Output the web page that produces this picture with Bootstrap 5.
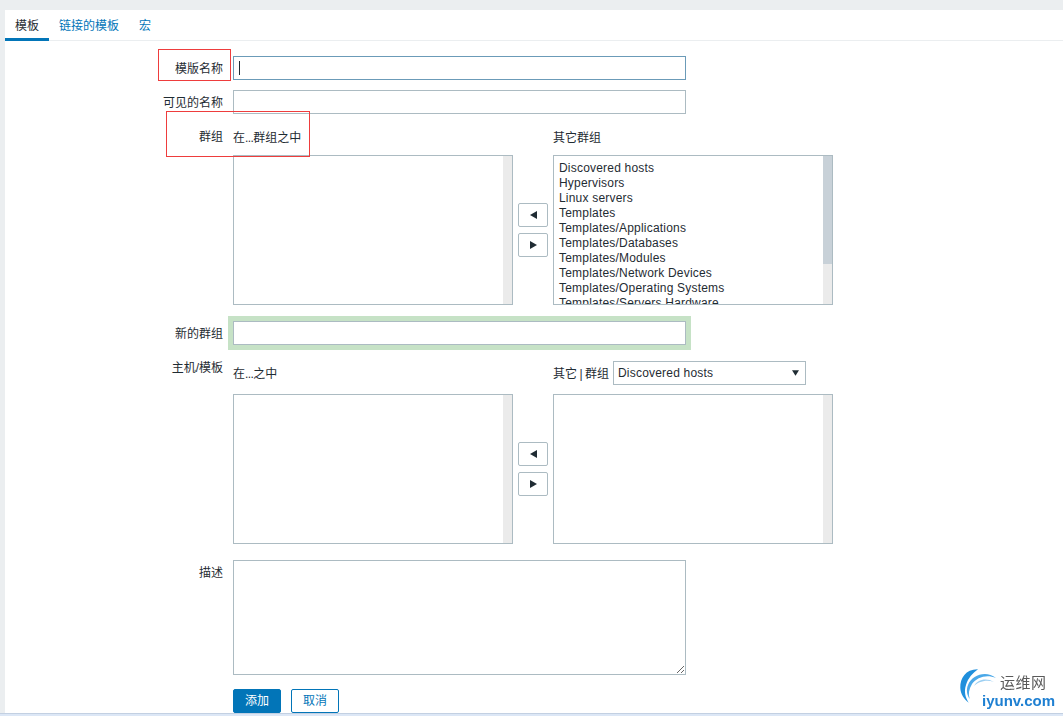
<!DOCTYPE html>
<html lang="zh">
<head>
<meta charset="utf-8">
<title>模板</title>
<link rel="stylesheet" href="https://cdn.jsdelivr.net/npm/bootstrap@5.3.0/dist/css/bootstrap.min.css">
<style>
html,body{height:716px;overflow:hidden}
body{background:#ebeef0;color:#1f2c33;font:12px/15px "Liberation Sans","Noto Sans CJK SC",sans-serif;padding:10px 0 0 5px}
.sheet{background:#fff;height:703px;position:relative}
.tabbar{height:31px;border-bottom:1px solid #ebeef0;margin:0}
.tabbar a{display:block;height:31px;padding:9px 10px 0;color:#0275b8;text-decoration:none;font-size:12px}
.tabbar a.on{color:#1f2c33;border-bottom:3px solid #0275b8}
.frm{padding-top:15px}
.line{display:flex;align-items:flex-start}
.lbl{width:218px;padding-right:0;text-align:right;flex:none}
.cell{margin-left:10px}
.fld{display:block;width:453px;height:24px;border:1px solid #acbbc2;border-radius:0;padding:0 5px;background:#fff;box-shadow:none}
.fld.act{border-color:#6b9bb8}
.l1 .lbl{padding-top:6px}.l2{margin-top:10px}.l2 .lbl{padding-top:6px}
.l3{margin-top:10px}.l3 .lbl{padding-top:6px}
.l4{margin-top:16px}.l4 .lbl{padding-top:6px}
.l5{margin-top:16px}.l5 .lbl{padding-top:0}
.l6{margin-top:16px}.l6 .lbl{padding-top:6px}
.l7{margin-top:14px;margin-left:228px}
.glow{outline:5px solid #c6e2c6;border-radius:0}
.hdrs{height:31px;display:flex}
.h-a{width:320px;padding-top:7px}
.h-b{display:flex;gap:4px;align-items:flex-start;padding-top:7px}
.l5 .hdrs{height:33px}
.l5 .h-b{padding-top:0}.l5 .h-b span{padding-top:6px;word-spacing:-.9px}
.l5 .h-a{padding-top:6px}
.dots{letter-spacing:-.6px}
.sel{width:193px;height:24px;border:1px solid #acbbc2;border-radius:0;padding:0 4px;font-size:12px;line-height:20px;letter-spacing:.2px;color:#1f2c33;background-color:#fff;background-size:7px 6px;background-position:right 6px center;background-repeat:no-repeat;background-image:url("data:image/svg+xml,%3Csvg xmlns='http://www.w3.org/2000/svg' viewBox='0 0 9 7'%3E%3Cpath fill='%231f2c33' d='M0 0h9L4.500 7z'/%3E%3C/svg%3E")}
.pair{display:flex;align-items:center}
.box{width:280px;height:150px;border:1px solid #acbbc2;position:relative;overflow:hidden;padding:5px 0 0 5px;line-height:15px;letter-spacing:.2px}
.box::after{content:"";position:absolute;top:0;right:0;bottom:0;width:9px;background:#ebebeb}
.box.thumb::before{content:"";position:absolute;top:0;right:0;height:108px;width:9px;background:#c8d1d8;z-index:1}
.box div{white-space:nowrap}
.mv{width:40px;display:flex;flex-direction:column;align-items:center;gap:6px;margin-top:0}
.mvb{width:30px;height:24px;padding:0;border:1px solid #acbbc2;border-radius:2px;background:#fff;display:flex;align-items:center;justify-content:center}
.memo{width:453px;height:115px;border:1px solid #acbbc2;display:block;border-radius:0}
.acts{display:flex;gap:10px}
.acts .btn{width:48px;height:24px;padding:0;font-size:12px;line-height:22px;border-radius:2px;border:1px solid #0275b8}
.add{background:#0275b8;color:#fff}
.off{background:#fff;color:#0275b8}
.caret-mark{position:absolute;left:234px;top:51px;width:1px;height:14px;background:#1f2c33}
.mark-a,.mark-b{position:absolute;border:1px solid #ee3d3d;pointer-events:none}
.mark-a{left:153px;top:39px;width:73px;height:32px}
.mark-b{left:161px;top:101px;width:144px;height:46px}
.stripe{position:fixed;left:0;right:0;top:713px;height:3px;background:#dce7f6;border-top:1px solid #c3d0e2}
.brand{position:fixed;left:958px;top:668px;width:105px;height:44px}
.brand svg{position:absolute;left:0;top:0}
.brand .cn{position:absolute;left:42px;top:5px;font-size:15px;line-height:18px;color:#5a5a5a;letter-spacing:.5px;font-family:"Noto Sans CJK SC",sans-serif}
.brand .en{position:absolute;left:24px;top:24px;font-size:15px;line-height:18px;font-weight:700;color:#1f80d2;font-family:"Liberation Sans",sans-serif}
</style>
</head>
<body>
<div class="sheet">
  <ul class="nav tabbar">
    <li class="nav-item"><a class="on" href="#">模板</a></li>
    <li class="nav-item"><a href="#">链接的模板</a></li>
    <li class="nav-item"><a href="#">宏</a></li>
  </ul>
  <form class="frm">
    <div class="line l1"><label class="lbl">模版名称</label><div class="cell"><input class="form-control fld act" type="text"></div></div>
    <div class="line l2"><label class="lbl">可见的名称</label><div class="cell"><input class="form-control fld" type="text"></div></div>
    <div class="line l3"><label class="lbl">群组</label><div class="cell">
      <div class="hdrs"><span class="h-a">在<span class="dots">...</span>群组之中</span><span class="h-b">其它群组</span></div>
      <div class="pair">
        <div class="box"></div>
        <div class="mv">
          <button type="button" class="mvb"><svg width="7" height="8" viewBox="0 0 7 8"><path fill="#1f2c33" d="M7 0v8L0 4z"/></svg></button>
          <button type="button" class="mvb"><svg width="7" height="8" viewBox="0 0 7 8"><path fill="#1f2c33" d="M0 0v8l7-4z"/></svg></button>
        </div>
        <div class="box thumb">
          <div>Discovered hosts</div><div>Hypervisors</div><div>Linux servers</div><div>Templates</div><div>Templates/Applications</div><div>Templates/Databases</div><div>Templates/Modules</div><div>Templates/Network Devices</div><div>Templates/Operating Systems</div><div>Templates/Servers Hardware</div>
        </div>
      </div>
    </div></div>
    <div class="line l4"><label class="lbl">新的群组</label><div class="cell"><input class="form-control fld glow" type="text"></div></div>
    <div class="line l5"><label class="lbl">主机/模板</label><div class="cell">
      <div class="hdrs"><span class="h-a">在<span class="dots">...</span>之中</span><div class="h-b"><span>其它 | 群组</span><select class="form-select sel"><option>Discovered hosts</option></select></div></div>
      <div class="pair">
        <div class="box"></div>
        <div class="mv">
          <button type="button" class="mvb"><svg width="7" height="8" viewBox="0 0 7 8"><path fill="#1f2c33" d="M7 0v8L0 4z"/></svg></button>
          <button type="button" class="mvb"><svg width="7" height="8" viewBox="0 0 7 8"><path fill="#1f2c33" d="M0 0v8l7-4z"/></svg></button>
        </div>
        <div class="box"></div>
      </div>
    </div></div>
    <div class="line l6"><label class="lbl">描述</label><div class="cell"><textarea class="form-control memo"></textarea></div></div>
    <div class="l7 acts"><button type="button" class="btn add">添加</button><button type="button" class="btn off">取消</button></div>
  </form>
  <span class="caret-mark"></span>
  <span class="mark-a"></span>
  <span class="mark-b"></span>
</div>
<div class="stripe"></div>
<div class="brand">
  <svg width="44" height="44" viewBox="0 0 44 44"><path fill="#1f8fdc" d="M20 1.300C8 1 2 10 2.300 19.700 2.500 26 6 31 10.700 34.700 7 29 6 23 8 17 10 10 15 5 20 1.300z"/><path fill="#4aa8e8" d="M38 10C28 2 14 7 10 17 8 22 9 27 11.700 31 10 26 11 21 14 16 19 9 29 6 38 10z"/><path fill="#9ccff2" d="M36 14C28 9 19 12 16 18 20 14 28 11 36 14z"/></svg>
  <span class="cn">运维网</span>
  <span class="en">iyunv.com</span>
</div>
</body>
</html>
